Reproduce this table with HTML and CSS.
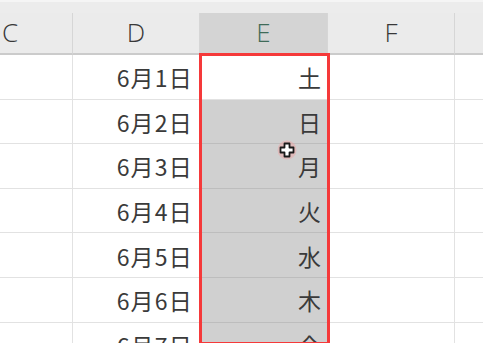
FILE: index.html
```html
<!DOCTYPE html>
<html lang="ja">
<head>
<meta charset="utf-8">
<link rel="stylesheet" href="styles.css">
</head>
<body>
<div class="sheet">
  <div class="topstrip"></div>
  <div class="grid">
    <div class="hd col-c">C</div>
    <div class="hd">D</div>
    <div class="hd hd-sel">E</div>
    <div class="hd">F</div>
    <div class="hd hd-last"></div>

    <div class="c"></div><div class="c date">6月1日</div><div class="c day active">土</div><div class="c"></div><div class="c last"></div>
    <div class="c"></div><div class="c date">6月2日</div><div class="c day sel">日</div><div class="c"></div><div class="c last"></div>
    <div class="c"></div><div class="c date">6月3日</div><div class="c day sel">月</div><div class="c"></div><div class="c last"></div>
    <div class="c"></div><div class="c date">6月4日</div><div class="c day sel">火</div><div class="c"></div><div class="c last"></div>
    <div class="c"></div><div class="c date">6月5日</div><div class="c day sel">水</div><div class="c"></div><div class="c last"></div>
    <div class="c"></div><div class="c date">6月6日</div><div class="c day sel">木</div><div class="c"></div><div class="c last"></div>
    <div class="c"></div><div class="c date">6月7日</div><div class="c day sel">金</div><div class="c"></div><div class="c last"></div>
  </div>
  <div class="redbox"></div>
  <div class="cursor">
    <svg width="20" height="20" viewBox="0 0 20 20">
      <circle cx="10" cy="10" r="9.5" fill="#f0a0a0" opacity="0.45"/>
      <path d="M7.5 3.5h5v4h4v5h-4v4h-5v-4h-4v-5h4z" fill="#fff" stroke="#1a1a1a" stroke-width="1.8" stroke-linejoin="round"/>
    </svg>
  </div>
</div>
</body>
</html>
```

FILE: styles.css
```css
html, body {
  margin: 0;
  padding: 0;
  background: #ffffff;
}
body {
  width: 483px;
  height: 355px;
  overflow: hidden;
  font-family: "Noto Sans CJK JP", "Noto Sans", sans-serif;
}
.sheet {
  position: relative;
  width: 483px;
  height: 343px;
  overflow: hidden;
  background: #fff;
}
.topstrip {
  height: 13px;
  background: #ececec;
  border-top: 2px solid #f5f5f5;
  box-sizing: border-box;
}
.grid {
  display: grid;
  grid-template-columns: 73px 127px 128px 127px 28px;
  grid-template-rows: 42px repeat(7, 44.6px);
}
.hd {
  background: #ebebeb;
  border-right: 1px solid #d6d6d6;
  border-bottom: 2px solid #cbcbcb;
  display: flex;
  align-items: center;
  justify-content: center;
  font-family: "Open Sans", "Noto Sans", sans-serif;
  font-weight: 300;
  font-size: 26px;
  color: #383838;
  padding-bottom: 2px;
  box-sizing: border-box;
}
.hd.col-c {
  justify-content: flex-start;
  padding-left: 2px;
}
.hd-sel {
  background: #d4d4d4;
  color: #3f6b58;
}
.hd-last {
  border-right: none;
}
.c {
  border-right: 1px solid #e2e2e2;
  border-bottom: 1px solid #e2e2e2;
  box-sizing: border-box;
  display: flex;
  align-items: center;
  justify-content: flex-end;
  font-size: 23px;
  color: #3a3a3a;
  padding-right: 7px;
  padding-top: 1px;
}
.c.last {
  border-right: none;
}
.date {
  letter-spacing: 1.2px;
  padding-right: 6px;
}
.day {
  padding-right: 6px;
}
.sel {
  background: #d0d0d0;
  border-bottom-color: #bdbdbd;
}
.active {
  background: #ffffff;
}
.redbox {
  position: absolute;
  left: 199px;
  top: 53px;
  width: 131px;
  height: 292px;
  border: 3px solid #f5393a;
  box-sizing: border-box;
}
.cursor {
  position: absolute;
  left: 277px;
  top: 140px;
  width: 20px;
  height: 20px;
}
.cursor svg {
  display: block;
}
```
